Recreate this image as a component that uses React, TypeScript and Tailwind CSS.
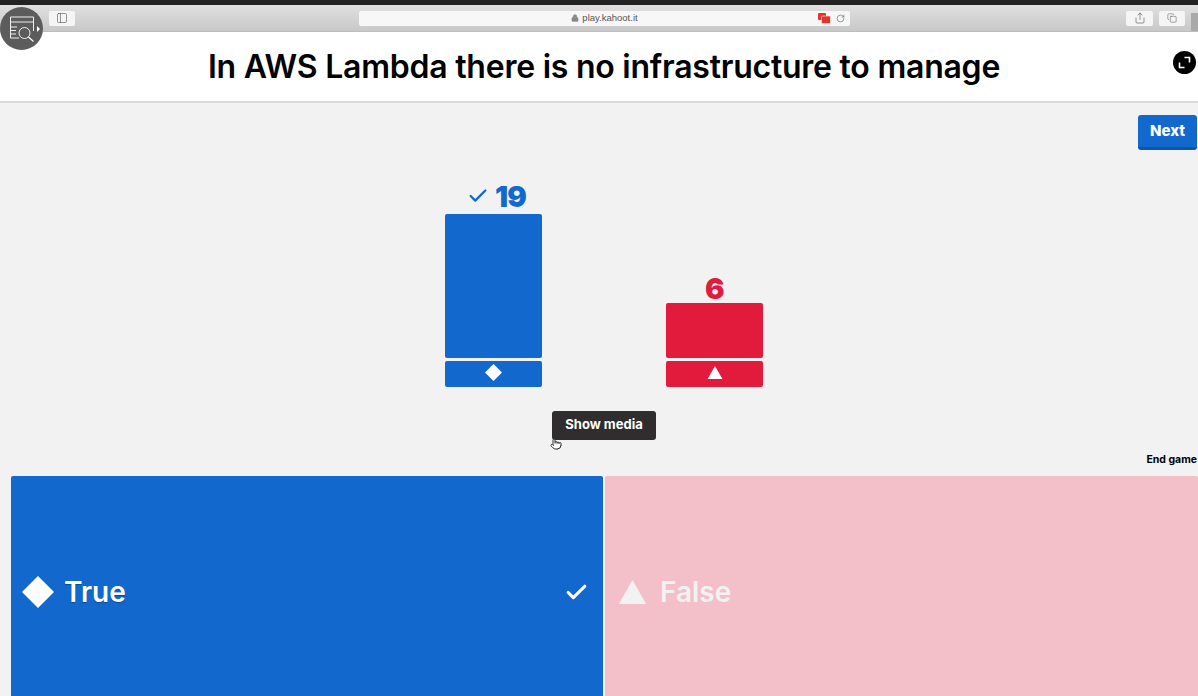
import React from 'react';
import { Lock, RotateCw, Share, Copy, Check, PanelLeft, Pointer } from 'lucide-react';

const FONT = "font-['Inter','Liberation_Sans',sans-serif]";

const Diamond = ({ size }: { size: number }) => (
  <svg width={size} height={size} viewBox="0 0 32 32" className="fill-current">
    <path d="M16 0 L32 16 L16 32 L0 16 Z" />
  </svg>
);

const Triangle = ({ width, height }: { width: number; height: number }) => (
  <svg width={width} height={height} viewBox="0 0 32 28" className="fill-current">
    <path d="M16 0 L32 28 L0 28 Z" />
  </svg>
);

const ToolbarButton = ({ children, className }: { children: React.ReactNode; className: string }) => (
  <div className={`h-[15px] rounded-[2px] bg-[#f5f5f5] flex items-center justify-center text-[#555] ${className}`}>
    {children}
  </div>
);

const BrowserBar = () => (
  <div className="h-[27px] flex items-center bg-gradient-to-b from-[#e0e0e0] to-[#c8c8c8] border-b border-[#bdbdbd] relative">
    <ToolbarButton className="w-[26px] ml-[49px]">
      <PanelLeft size={12} strokeWidth={1.25} />
    </ToolbarButton>
    <div className="w-[491px] h-[15px] ml-[284px] rounded-[2px] bg-[#f7f7f7] flex items-center relative">
      <div className="flex-1 flex items-center justify-center gap-[3px] text-[9.5px] text-[#555] font-['Liberation_Sans',sans-serif]">
        <Lock size={8} className="fill-[#888] text-[#888]" />
        <span>play.kahoot.it</span>
      </div>
      <div className="absolute right-[5px] flex items-center gap-[5px]">
        <svg width="13" height="11" viewBox="0 0 13 11" className="fill-[#e5352b]">
          <rect x="0" y="0" width="8" height="7" rx="1" />
          <rect x="3.5" y="3" width="9" height="7.5" rx="1" stroke="#f7f7f7" strokeWidth="0.6" />
        </svg>
        <RotateCw size={9} className="text-[#777]" />
      </div>
    </div>
    <ToolbarButton className="w-[27px] ml-[276px]">
      <Share size={12} strokeWidth={1.25} />
    </ToolbarButton>
    <ToolbarButton className="w-[26px] ml-[6px]">
      <Copy size={10} strokeWidth={1.25} />
    </ToolbarButton>
    <div className="w-[7px] h-[18px] ml-[6px] self-end bg-[#a9a9a9]" />
  </div>
);

const RecorderBadge = () => (
  <div className="absolute left-0 top-[7px] w-[43px] h-[43px] rounded-full bg-[#5c5c5c]">
    <svg width="43" height="43" viewBox="0 0 43 43" fill="none" stroke="white" strokeWidth="0.9">
      <path d="M19 31 H10.5 V10 H33.5 V24" />
      <path d="M10.5 15 H33.5 M10.5 20 H17 M10.5 23.5 H16 M10.5 27 H16" />
      <circle cx="24.5" cy="26" r="5.5" />
      <path d="M28.5 30 L33.5 34.5" strokeWidth="1.2" />
    </svg>
    <div className="absolute right-[3px] top-[19px] w-0 h-0 border-y-[3px] border-y-transparent border-l-[3px] border-l-white" />
  </div>
);

const ChartColumn = ({ value, correct, barHeight, color, icon }: {
  value: number;
  correct?: boolean;
  barHeight: string;
  color: string;
  icon: React.ReactNode;
}) => (
  <div className="w-[97px] flex flex-col items-center">
    <div className={`flex items-center gap-[6px] h-[34px] text-[29px] font-black tracking-tight leading-none ${correct ? 'pb-[2px] pl-[6px]' : 'pt-[4px]'} ${color === 'blue' ? 'text-[#1368ce]' : 'text-[#e21b3c]'}`}>
      {correct && <Check size={22} strokeWidth={2.5} />}
      <span>{value}</span>
    </div>
    <div className={`w-full rounded-[2px] ${barHeight} ${color === 'blue' ? 'bg-[#1368ce]' : 'bg-[#e21b3c]'}`} />
    <div className={`w-full h-[26px] mt-[3px] pb-[3px] rounded-[2px] flex items-center justify-center text-white ${color === 'blue' ? 'bg-[#1368ce]' : 'bg-[#e21b3c]'}`}>
      {icon}
    </div>
  </div>
);

export default function App() {
  return (
    <div className={`w-[1198px] h-[696px] overflow-hidden relative flex flex-col bg-[#f3f2f3] ${FONT}`}>
      <div className="h-[5px] bg-[#222222]" />
      <BrowserBar />

      {/* Question */}
      <div className="h-[71px] bg-white border-b-2 border-[#d9d9d9] flex items-center justify-center relative pl-[10px]">
        <h1 className="text-[32px] font-semibold text-black tracking-[-0.24px] whitespace-nowrap">
          In AWS Lambda there is no infrastructure to manage
        </h1>
      </div>

      {/* Results */}
      <div className="flex-1 flex flex-col min-h-0">
        <div className="flex justify-end pt-[12px]">
          <button className="w-[59px] h-[35px] mr-px rounded-[3px] bg-[#1368ce] border-b-[3px] border-[#0f57ad] text-white text-[15px] font-extrabold">
            Next
          </button>
        </div>

        <div className="flex justify-center items-end gap-[124px] h-[237px] pl-[10px]">
          <ChartColumn
            value={19}
            correct
            barHeight="h-[144px]"
            color="blue"
            icon={<Diamond size={17} />}
          />
          <ChartColumn
            value={6}
            barHeight="h-[55px]"
            color="red"
            icon={<Triangle width={16} height={13} />}
          />
        </div>

        <div className="flex justify-center pt-[24px] pl-[10px]">
          <button className="w-[104px] h-[29px] pb-[2px] rounded-[3px] bg-[#2f2d2d] text-white text-[13px] font-bold">
            Show media
          </button>
        </div>

        <div className="flex justify-end h-[36px] items-center pt-[3px]">
          <span className="text-[10.5px] font-bold text-black mr-px whitespace-nowrap">End game</span>
        </div>

        {/* Answers */}
        <div className="flex-1 flex gap-[2px] pl-[11px]">
          <div className="flex-1 rounded-t-[2px] bg-[#1368ce] flex items-center pl-[11px] pr-[14px] pt-[12px] text-white">
            <Diamond size={32} />
            <span className="ml-[10px] text-[28px] font-semibold [text-shadow:0_1px_1px_rgba(0,0,0,0.3)]">True</span>
            <Check size={25} strokeWidth={3} className="ml-auto" />
          </div>
          <div className="w-[593px] rounded-t-[2px] bg-[#f3bfc8] flex items-center pl-[13px] pt-[12px] text-[#f2f2f2]">
            <Triangle width={29} height={24} />
            <span className="ml-[13px] text-[28px] font-semibold">False</span>
          </div>
        </div>
      </div>

      <RecorderBadge />

      {/* Fullscreen toggle */}
      <div className="absolute left-[1173px] top-[51px] w-[23px] h-[23px] rounded-full bg-black flex items-center justify-center">
        <svg width="13" height="13" viewBox="0 0 13 13" fill="none" stroke="white" strokeWidth="1.6">
          <path d="M6.5 1.5 H11.5 V6.5" />
          <path d="M1.5 6.5 V11.5 H6.5" />
        </svg>
      </div>

      {/* Mouse pointer */}
      <Pointer size={12} className="absolute left-[550px] top-[438px] text-[#333] fill-white" />
    </div>
  );
}
